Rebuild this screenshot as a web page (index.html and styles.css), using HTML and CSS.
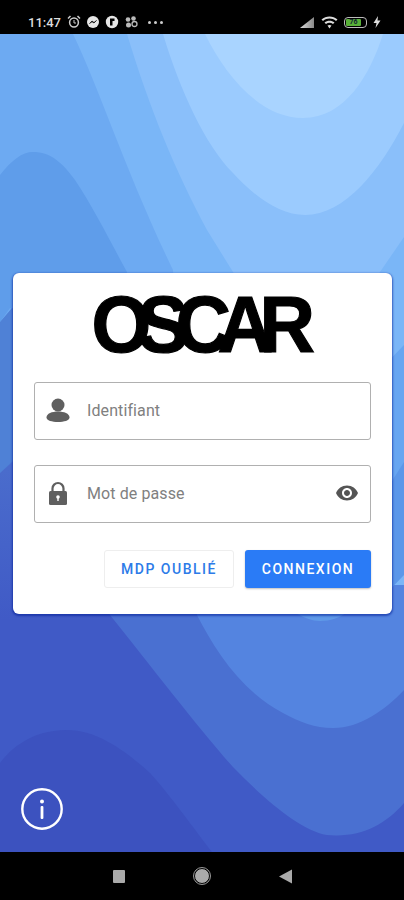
FILE: index.html
```html
<!DOCTYPE html>
<html lang="fr">
<head>
    <meta charset="UTF-8">
    <meta name="viewport" content="width=device-width, initial-scale=1.0">
    <title>Oscar - Connexion</title>
    <link rel="stylesheet" href="styles.css">
</head>
<body>
    <div class="phone">
        <!-- Status bar -->
        <div class="status-bar">
            <div class="status-left">
                <span class="time">11:47</span>
                <svg class="status-icon" viewBox="0 0 14 14" width="14" height="14">
                    <circle cx="7" cy="7.5" r="4.4" fill="none" stroke="#ccc" stroke-width="1.5"/>
                    <path d="M7 5v3h2" fill="none" stroke="#ccc" stroke-width="1"/>
                    <path d="M1 3.5 3.5 1M13 3.5 10.500 1" stroke="#ccc" stroke-width="1.5"/>
                </svg>
                <svg class="status-icon" viewBox="0 0 14 14" width="14" height="14">
                    <circle cx="7" cy="7" r="6" fill="#e6e6e6"/>
                    <path d="M3.500 8.500 6 6l2 1.500L10.500 5.500 8 8 6 6.800z" fill="#000" stroke="#000" stroke-width=".6"/>
                </svg>
                <svg class="status-icon" viewBox="0 0 14 14" width="14" height="14">
                    <circle cx="7" cy="7" r="6.200" fill="#e6e6e6"/>
                    <path d="M5 3.500h4.500v2.500H7.500v4.500H5z" fill="#000"/>
                </svg>
                <svg class="status-icon" viewBox="0 0 14 14" width="14" height="14">
                    <circle cx="4" cy="4.500" r="2.300" fill="#bbb"/>
                    <circle cx="9.500" cy="3.500" r="2.300" fill="#bbb"/>
                    <circle cx="10.500" cy="9" r="2.500" fill="none" stroke="#bbb" stroke-width="1.300"/>
                    <circle cx="4.500" cy="10" r="2.500" fill="#bbb"/>
                </svg>
                <span class="status-dots"><i></i><i></i><i></i></span>
            </div>
            <div class="status-right">
                <svg viewBox="0 0 15 11" width="15" height="11">
                    <defs>
                        <linearGradient id="signalFill" x1="0" y1="0" x2="1" y2="0">
                            <stop offset="0" stop-color="#ddd"/>
                            <stop offset="1" stop-color="#888"/>
                        </linearGradient>
                    </defs>
                    <path d="M0 11 14 0v11z" fill="url(#signalFill)"/>
                </svg>
                <svg viewBox="0 0 17 13" width="17" height="13">
                    <path d="M.5 3.500C5 -.500 12 -.500 16.500 3.500L15 5C11 1.800 6 1.800 2 5zM3.500 6.500c3-2.500 7-2.500 10 0l-1.500 1.500c-2-1.700-5-1.700-7 0zM6.500 9.500c1.200-.8 2.800-.8 4 0L8.500 12.500z" fill="#ddd"/>
                </svg>
                <div class="battery"><div class="battery-level">76</div></div>
                <svg viewBox="0 0 8 12" width="8" height="12">
                    <path d="M5 0 .5 7H3.500L2.500 12 7.500 4.500H4.500z" fill="#ddd"/>
                </svg>
            </div>
        </div>

        <main class="screen">
            <!-- Wavy background -->
            <svg class="waves" viewBox="0 34 404 818" width="404" height="818">
                <defs>
                    <linearGradient id="baseFill" gradientUnits="userSpaceOnUse" x1="0" y1="470" x2="0" y2="620">
                        <stop offset="0" stop-color="#4a6ccc"/>
                        <stop offset="1" stop-color="#405ac6"/>
                    </linearGradient>
                    <linearGradient id="bandA" gradientUnits="userSpaceOnUse" x1="0" y1="34" x2="0" y2="640">
                        <stop offset="0.7" stop-color="#6daaf2"/>
                        <stop offset="0.7" stop-color="#4a70d1"/>
                    </linearGradient>
                    <linearGradient id="bandB" gradientUnits="userSpaceOnUse" x1="0" y1="34" x2="0" y2="640">
                        <stop offset="0.7" stop-color="#7ab6f7"/>
                        <stop offset="0.91" stop-color="#7ab6f7"/>
                        <stop offset="0.91" stop-color="#5484e0"/>
                    </linearGradient>
                </defs>
                <rect x="0" y="34" width="404" height="818" fill="url(#baseFill)"/>
                <path d="M0 34H404V803C385 825 360 838 327 835 300 830 265 800 233 767 200 730 150 665 110 615L60 520 13 462 0 473Z" fill="url(#bandA)"/>
                <path d="M0 175C12 160 22 152 33 152 50 152 62 162 75 180 95 210 112 245 127 272L100 340 10 308 0 322Z" fill="#5f9dea"/>
                <path d="M0 322 12 308 100 340V461H13L0 473Z" fill="#4f81d6"/>
                <path d="M73 34C100 90 125 170 173 270L197 615C215 650 240 690 283 713 300 722 315 728 333 728 360 728 385 710 404 690V34Z" fill="url(#bandB)"/>
                <path d="M404 345 380 370V480H404Z" fill="#67a6f1"/>
                <path d="M404 462 380 500V600L404 575Z" fill="#5b97e9"/>
                <path d="M293 612C305 618 312 621 320 621 330 621 340 618 347 612Z" fill="#5f9ae8"/>
                <path d="M127 34C150 110 175 170 207 230L233 272 300 400 380 272 404 237V34Z" fill="#8abffa"/>
                <path d="M163 34C180 90 205 145 233 173 255 197 280 215 305 215 345 215 380 170 404 123V34Z" fill="#9bcbfe"/>
                <path d="M205 34C225 75 260 118 303 118 345 118 370 75 383 34Z" fill="#a9d4ff"/>
                <path d="M0 763C10 750 30 730 67 730 100 730 130 755 150 773 170 795 195 830 212 852H0Z" fill="#3c52bf"/>
            </svg>

            <!-- Login card -->
            <form class="card">
                <div class="logo"><span class="logo-text">OSCAR</span></div>

                <div class="field">
                    <svg class="field-icon" viewBox="0 0 24 24" width="24" height="24">
                        <circle cx="12" cy="7" r="6.500" fill="#5f5f5f"/>
                        <path d="M.5 19.500C.5 15.500 6 13.500 12 13.500S23.500 15.500 23.500 19.500C23.500 22.500 18 24 12 24S.5 22.500.5 19.500Z" fill="#5f5f5f"/>
                    </svg>
                    <span class="field-text">Identifiant</span>
                </div>

                <div class="field">
                    <svg class="field-icon" viewBox="0 0 24 24" width="24" height="24">
                        <path d="M6.500 11V7.500a5.500 5.500 0 0 1 11 0V11" fill="none" stroke="#5f5f5f" stroke-width="2.200"/>
                        <rect x="3" y="10" width="18" height="14" rx="1.500" fill="#5f5f5f"/>
                        <circle cx="12" cy="16" r="1.800" fill="#fff"/>
                        <rect x="11.300" y="16" width="1.400" height="4" fill="#fff"/>
                    </svg>
                    <span class="field-text">Mot de passe</span>
                    <svg class="eye-icon" viewBox="0 0 24 24" width="24" height="24">
                        <path d="M12 4.500C7 4.500 2.730 7.610 1 12c1.730 4.390 6 7.500 11 7.500s9.270-3.110 11-7.500c-1.730-4.390-6-7.500-11-7.500zM12 17c-2.760 0-5-2.240-5-5s2.240-5 5-5 5 2.240 5 5-2.240 5-5 5zm0-8c-1.660 0-3 1.340-3 3s1.340 3 3 3 3-1.340 3-3-1.340-3-3-3z" fill="#555"/>
                    </svg>
                </div>

                <div class="actions">
                    <button type="button" class="btn btn-light">MDP OUBLIÉ</button>
                    <button type="submit" class="btn btn-primary">CONNEXION</button>
                </div>
            </form>

            <svg class="info" viewBox="0 0 42 42" width="42" height="42">
                <circle cx="21" cy="21" r="19.700" fill="none" stroke="#fff" stroke-width="2.400"/>
                <circle cx="21" cy="13.500" r="2" fill="#fff"/>
                <rect x="19.600" y="18" width="2.800" height="13" rx="1" fill="#fff"/>
            </svg>
        </main>

        <!-- Android navigation bar -->
        <div class="nav-bar">
            <div class="nav-square"></div>
            <div class="nav-circle"></div>
            <svg viewBox="0 0 14 15" width="14" height="15">
                <path d="M0 7.500 13 .5V14.500Z" fill="#aaa"/>
            </svg>
        </div>
    </div>
</body>
</html>
```

FILE: styles.css
```css
/* General Styles */
body {
    margin: 0;
    background: #000;
    font-family: Roboto, "Liberation Sans", sans-serif;
}

.phone {
    width: 404px;
    height: 900px;
    display: flex;
    flex-direction: column;
    overflow: hidden;
}

/* Status bar */
.status-bar {
    height: 34px;
    flex-shrink: 0;
    background: #000;
    display: flex;
    justify-content: space-between;
    align-items: center;
    padding: 10px 23px 0 28px;
    box-sizing: border-box;
    color: #ddd;
}

.status-left {
    display: flex;
    align-items: center;
}

.time {
    font-size: 13px;
    font-weight: 500;
    margin-right: 6px;
}

.status-icon {
    margin-right: 5px;
}

.status-dots {
    display: flex;
    gap: 3px;
    margin-left: 5px;
}

.status-dots i {
    width: 3px;
    height: 3px;
    border-radius: 50%;
    background: #ccc;
}

.status-right {
    display: flex;
    align-items: center;
    gap: 6px;
}

.battery {
    width: 23px;
    height: 11px;
    border: 1px solid #bbb;
    border-radius: 4px;
    box-sizing: border-box;
    padding: 1px;
}

.battery-level {
    width: 15px;
    height: 7px;
    background: #58b038;
    border-radius: 1px;
    color: #123;
    font-size: 7px;
    font-weight: 700;
    line-height: 7px;
    text-align: center;
}

/* Main screen */
.screen {
    position: relative;
    flex: 1;
    display: flex;
    flex-direction: column;
    align-items: flex-start;
    padding: 239px 0 22px;
    box-sizing: border-box;
}

.waves {
    position: absolute;
    top: 0;
    left: 0;
}

/* Card */
.card {
    position: relative;
    width: 379px;
    height: 341px;
    margin-left: 13px;
    padding: 0 21px;
    box-sizing: border-box;
    background: #fff;
    border-radius: 6px;
    box-shadow: 0 1px 2px 1px rgba(0, 30, 150, 0.55);
}

.logo {
    height: 109px;
    line-height: 103px;
    text-align: center;
}

.logo-text {
    display: inline-block;
    font-family: "Liberation Sans", Arial, sans-serif;
    font-size: 80px;
    font-weight: 700;
    letter-spacing: -14px;
    margin-right: 13px;
    color: #000;
    -webkit-text-stroke: 1.2px #000;
    transform: scaleX(0.96);
}

.field {
    height: 58px;
    margin-bottom: 25px;
    display: flex;
    align-items: center;
    padding: 0 11px 2px;
    box-sizing: border-box;
    border: 1px solid #b0b0b0;
    border-radius: 3px;
}

.field-text {
    flex: 1;
    margin-left: 17px;
    font-size: 16px;
    color: #808080;
    letter-spacing: 0.1px;
}

.actions {
    display: flex;
    justify-content: flex-end;
    gap: 11px;
    margin-top: 27px;
}

.btn {
    height: 38px;
    border-radius: 3px;
    font-family: Roboto, sans-serif;
    font-size: 14px;
    font-weight: 500;
    letter-spacing: 1.5px;
    cursor: pointer;
}

.btn-light {
    width: 130px;
    background: #fff;
    color: #2d7be8;
    border: 1px solid #eee;
}

.btn-primary {
    width: 126px;
    background: #2a7bf6;
    color: #fff;
    border: none;
    box-shadow: 0 1px 2px rgba(0, 0, 0, 0.25);
}

.info {
    position: relative;
    margin-top: auto;
    margin-left: 21px;
}

/* Navigation bar */
.nav-bar {
    height: 48px;
    flex-shrink: 0;
    background: #000;
    display: flex;
    justify-content: center;
    align-items: center;
    gap: 69px;
    padding-left: 2px;
}

.nav-square {
    width: 12px;
    height: 13px;
    background: #aaa;
    border-radius: 1px;
}

.nav-circle {
    width: 14px;
    height: 14px;
    background: #aaa;
    border: 1px solid #000;
    outline: 1.500px solid #999;
    border-radius: 50%;
}
```
